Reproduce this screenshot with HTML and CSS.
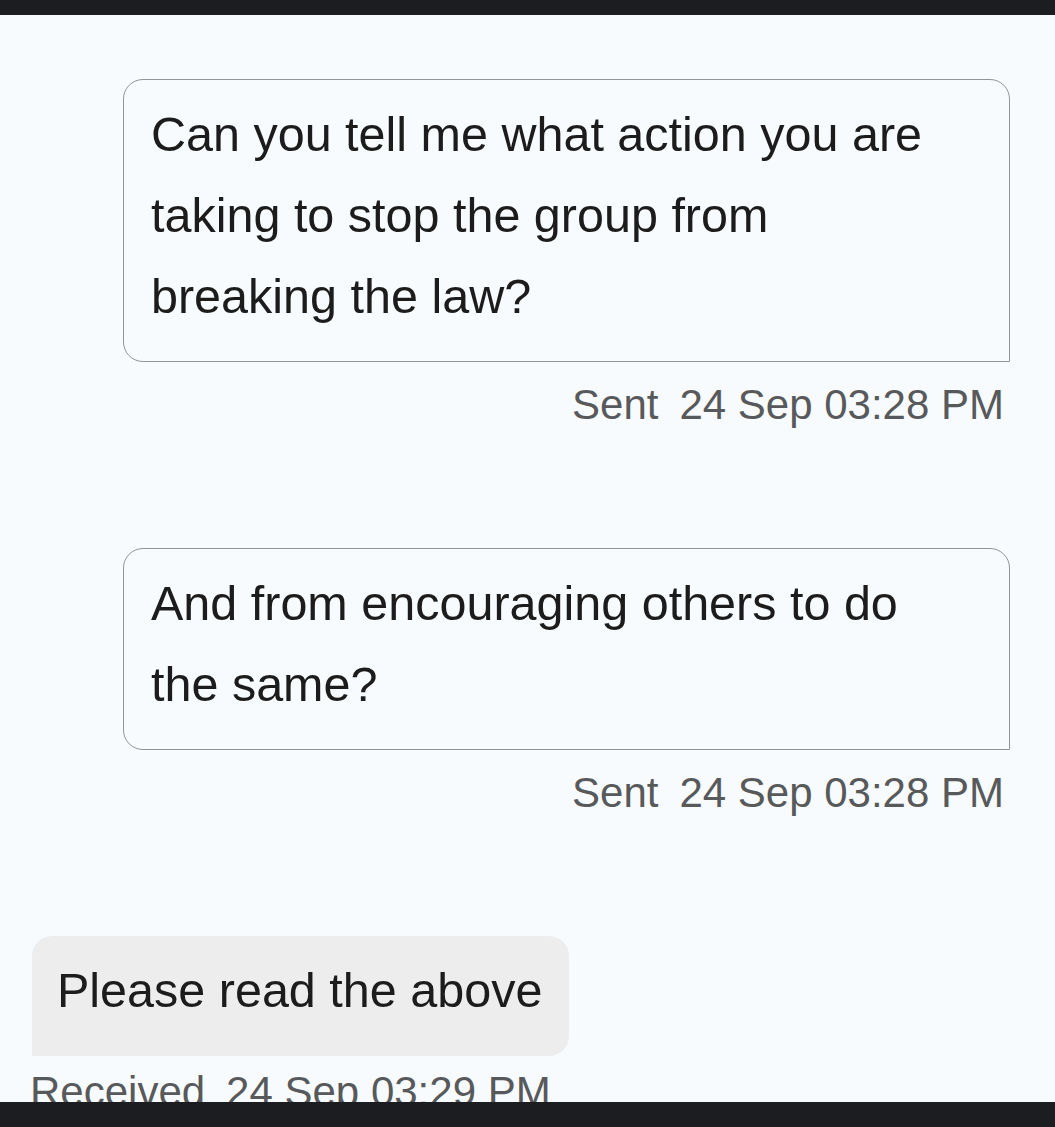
FILE: index.html
```html
<!DOCTYPE html>
<html lang="en">
<head>
<meta charset="utf-8">
<title>Messages</title>
<link rel="stylesheet" href="styles.css">
</head>
<body>
<div class="frame">
  <div class="bar bar-top"></div>
  <main class="thread">
    <section class="msg msg-sent">
      <div class="bubble bubble-sent">Can you tell me what action you are taking to stop the group from breaking the law?</div>
      <div class="meta meta-sent"><span class="meta-label">Sent</span><span>24 Sep 03:28 PM</span></div>
    </section>
    <section class="msg msg-sent">
      <div class="bubble bubble-sent">And from encouraging others to do the same?</div>
      <div class="meta meta-sent"><span class="meta-label">Sent</span><span>24 Sep 03:28 PM</span></div>
    </section>
    <section class="msg msg-received">
      <div class="bubble bubble-received">Please read the above</div>
      <div class="meta meta-received"><span class="meta-label">Received</span><span>24 Sep 03:29 PM</span></div>
    </section>
  </main>
  <div class="bar bar-bottom"></div>
</div>
</body>
</html>
```

FILE: styles.css
```css
* { box-sizing: border-box; }
html, body {
  margin: 0;
  padding: 0;
  height: 100%;
}
body {
  background: #f7fbfd;
  font-family: "Liberation Sans", Arial, sans-serif;
  color: #1c1c1c;
}
.frame {
  display: flex;
  flex-direction: column;
  height: 100vh;
}
.bar {
  flex: none;
  background: #1c1d21;
}
.bar-top { height: 15px; }
.bar-bottom { height: 25px; }
.thread {
  flex: 1;
  overflow: hidden;
  display: flex;
  flex-direction: column;
  gap: 118px;
  padding: 64px 45px 0 32px;
}
.msg {
  display: flex;
  flex-direction: column;
}
.msg-sent { align-items: flex-end; }
.msg-received { align-items: flex-start; }
.bubble {
  font-size: 48.5px;
  line-height: 81px;
}
.bubble-sent {
  width: 887px;
  padding: 14px 50px 24px 27px;
  border: 1px solid #929496;
  border-radius: 20px 20px 0 20px;
  background: #f7fbfd;
}
.bubble-received {
  background: #ededed;
  border-radius: 20px 20px 20px 0;
  padding: 14px 27px 25px 25px;
}
.meta {
  font-size: 42px;
  line-height: 50px;
  color: #58595b;
  display: flex;
  gap: 21px;
  white-space: nowrap;
}
.meta-sent {
  margin-top: 18px;
  margin-right: 6px;
}
.meta-received {
  margin-top: 11px;
  margin-left: -2px;
}
```
